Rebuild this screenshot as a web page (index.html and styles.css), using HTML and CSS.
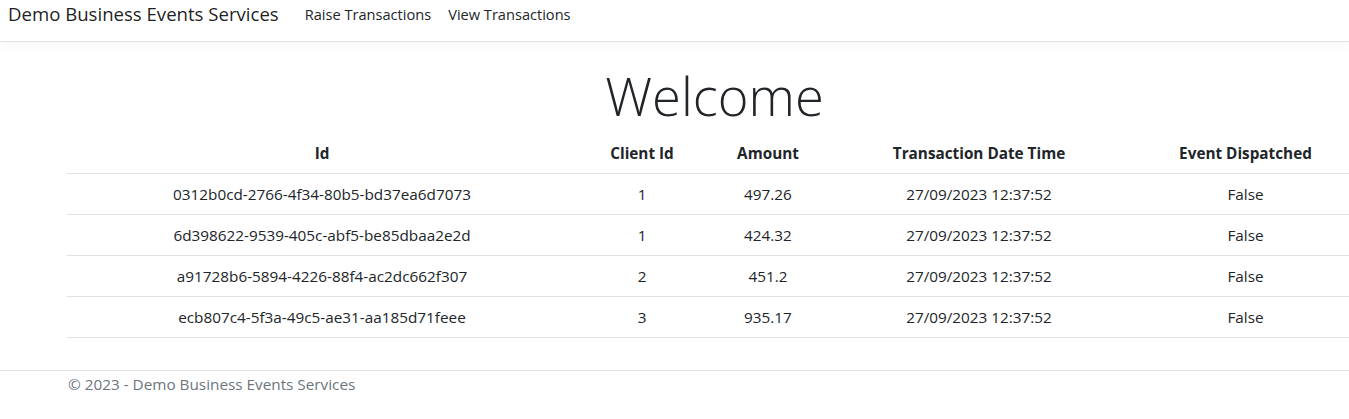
FILE: index.html
```html
<!DOCTYPE html>
<html lang="en">
<head>
<meta charset="utf-8">
<title>Demo Business Events Services</title>
<link rel="stylesheet" href="styles.css">
</head>
<body>
<header class="navbar">
  <a class="brand" href="#">Demo Business Events Services</a>
  <nav class="nav-links">
    <a class="nav-link" href="#">Raise Transactions</a>
    <a class="nav-link" href="#">View Transactions</a>
  </nav>
</header>
<main class="content">
  <h1 class="welcome">Welcome</h1>
  <table class="tx-table">
    <colgroup>
      <col class="c-id"><col class="c-client"><col class="c-amount"><col class="c-date"><col class="c-event">
    </colgroup>
    <thead>
      <tr><th>Id</th><th>Client Id</th><th>Amount</th><th>Transaction Date Time</th><th>Event Dispatched</th></tr>
    </thead>
    <tbody>
      <tr><td>0312b0cd-2766-4f34-80b5-bd37ea6d7073</td><td>1</td><td>497.26</td><td>27/09/2023 12:37:52</td><td>False</td></tr>
      <tr><td>6d398622-9539-405c-abf5-be85dbaa2e2d</td><td>1</td><td>424.32</td><td>27/09/2023 12:37:52</td><td>False</td></tr>
      <tr><td>a91728b6-5894-4226-88f4-ac2dc662f307</td><td>2</td><td>451.2</td><td>27/09/2023 12:37:52</td><td>False</td></tr>
      <tr><td>ecb807c4-5f3a-49c5-ae31-aa185d71feee</td><td>3</td><td>935.17</td><td>27/09/2023 12:37:52</td><td>False</td></tr>
    </tbody>
  </table>
</main>
<footer class="footer">
  <div class="footer-inner">&copy; 2023 - Demo Business Events Services</div>
</footer>
</body>
</html>
```
FILE: styles.css
```css
html, body {
  margin: 0;
  padding: 0;
  overflow: hidden;
}
body {
  font-family: "Open Sans", "Noto Sans", sans-serif;
  font-size: 15.3px;
  color: #212529;
  background: #fff;
  width: 1349px;
}
a { text-decoration: none; color: inherit; }

.navbar {
  display: flex;
  align-items: center;
  height: 41px;
  border-bottom: 1px solid #dee2e6;
  box-shadow: 0 4px 12px rgba(0,0,0,0.04);
  padding-left: 8px;
}
.brand {
  font-size: 18.6px;
  color: rgba(0,0,0,0.9);
  margin-right: 26px;
  margin-top: -14px;
}
.nav-links {
  display: flex;
  gap: 17px;
  margin-top: -14px;
}
.nav-link {
  font-size: 14.6px;
  color: #212529;
}

.content {
  margin-left: 67px;
  width: 1295px;
}
.welcome {
  font-size: 52.5px;
  font-weight: 300;
  text-align: center;
  margin: 20px 0 4px;
  line-height: 67px;
}
.tx-table {
  width: 1295px;
  border-collapse: collapse;
  table-layout: fixed;
}
.c-id { width: 510px; }
.c-client { width: 130px; }
.c-amount { width: 122px; }
.c-date { width: 300px; }
.c-event { width: 233px; }
.tx-table th, .tx-table td {
  text-align: center;
  padding: 8px;
  line-height: 24px;
  border-bottom: 1px solid #dee2e6;
  white-space: nowrap;
}
.tx-table th { font-weight: 700; }

.footer {
  margin-top: 32px;
  border-top: 1px solid #dee2e6;
  color: #6c757d;
}
.footer-inner {
  padding-left: 68px;
  line-height: 26px;
}
```
